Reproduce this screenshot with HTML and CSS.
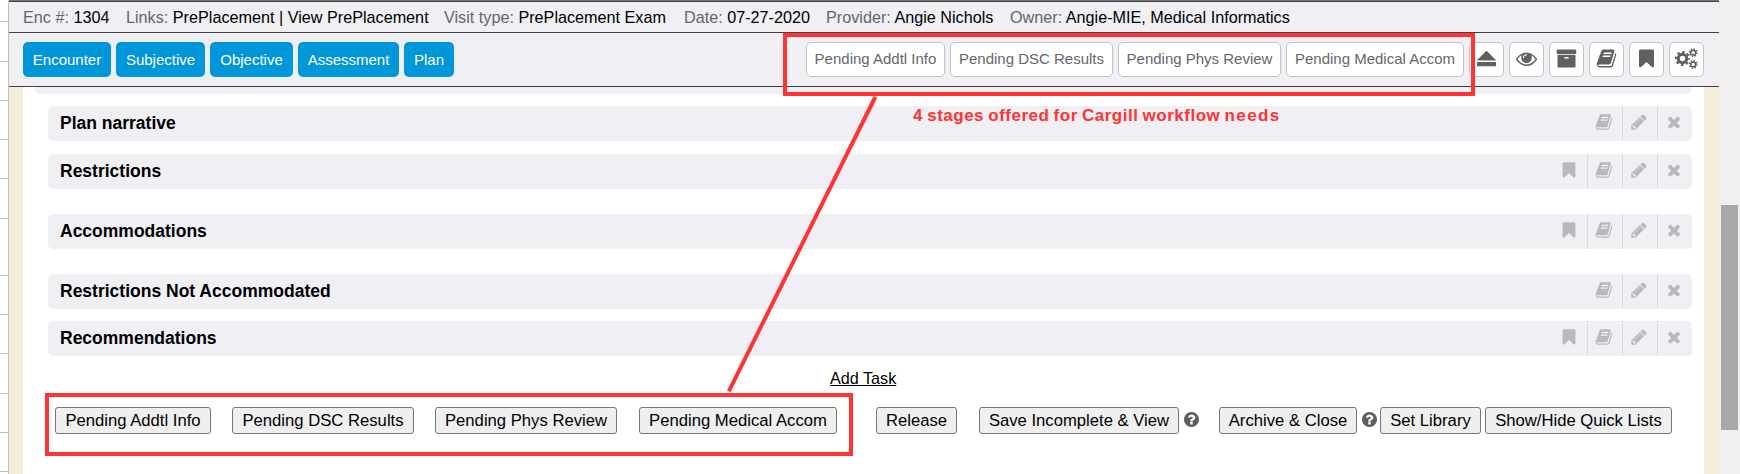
FILE: index.html
```html
<!DOCTYPE html>
<html lang="en">
<head>
<meta charset="utf-8">
<title>Encounter 1304</title>
<link rel="stylesheet" href="styles.css">
</head>
<body>
<svg class="defs" width="0" height="0">
  <symbol id="bookmark" viewBox="0 0 1792 1792"><path d="M1420 128q23 0 44 9 33 13 52.500 41t19.500 62v1289q0 34-19.500 62t-52.500 41q-19 8-44 8-48 0-83-32l-441-424-441 424q-36 33-83 33-23 0-44-9-33-13-52.500-41t-19.500-62v-1289q0-34 19.500-62t52.500-41q21-9 44-9h1048z"/></symbol>
  <symbol id="book" viewBox="0 0 1792 1792"><path d="M1703 478q40 57 18 129l-275 906q-19 64-76.500 107.500t-122.500 43.500h-923q-77 0-148.500-53.500t-99.500-131.500q-24-67-2-127 0-4 3-27t4-37q1-8-3-21.500t-3-19.500q2-11 8-21t16.500-23.500 16.500-23.500q23-38 45-91.500t30-91.500q3-10 .5-30t-.5-28q3-11 17-28t17-23q21-36 42-92t25-90q1-9-2.500-32t.5-28q4-13 22-30.500t22-22.500q19-26 42.500-84.500t27.500-96.500q1-8-3-25.500t-2-26.500q2-8 9-18t18-23 17-21q8-12 16.500-30.500t15-35 16-36 19.500-32 26.500-23.500 36-11.500 47.500 5.500l-1 3q38-9 51-9h761q74 0 114 56t18 130l-274 906q-36 119-71.500 153.500t-128.500 34.500h-869q-27 0-38 15-11 16-1 43 24 70 144 70h923q29 0 56-15.500t35-41.500l300-987q7-22 5-57 38 15 59 43zm-1064 2q-4 13 2 22.500t20 9.500h608q13 0 25.500-9.500t16.500-22.500l21-64q4-13-2-22.500t-20-9.500h-608q-13 0-25.500 9.500t-16.500 22.500zm-83 256q-4 13 2 22.500t20 9.500h608q13 0 25.500-9.500t16.500-22.500l21-64q4-13-2-22.500t-20-9.500h-608q-13 0-25.500 9.500t-16.500 22.500z"/></symbol>
  <symbol id="pencil" viewBox="0 0 1792 1792"><path d="M491 1536l91-91-235-235-91 91v107h128v128h107zm523-928q0-22-22-22-10 0-17 7l-542 542q-7 7-7 17 0 22 22 22 10 0 17-7l542-542q7-7 7-17zm-54-192l416 416-832 832h-416v-416zm683 96q0 53-37 90l-166 166-416-416 166-165q36-38 90-38 53 0 91 38l235 234q37 39 37 91z"/></symbol>
  <symbol id="times" viewBox="0 0 1792 1792"><path d="M1490 1322q0 40-28 68l-136 136q-28 28-68 28t-68-28l-294-294-294 294q-28 28-68 28t-68-28l-136-136q-28-28-28-68t28-68l294-294-294-294q-28-28-28-68t28-68l136-136q28-28 68-28t68 28l294 294 294-294q28-28 68-28t68 28l136 136q28 28 28 68t-28 68l-294 294 294 294q28 28 28 68z"/></symbol>
  <symbol id="archive" viewBox="0 0 1792 1792"><path d="M1088 832q0-26-19-45t-45-19h-256q-26 0-45 19t-19 45 19 45 45 19h256q26 0 45-19t19-45zm576-192v960q0 26-19 45t-45 19h-1408q-26 0-45-19t-19-45v-960q0-26 19-45t45-19h1408q26 0 45 19t19 45zm64-448v256q0 26-19 45t-45 19h-1536q-26 0-45-19t-19-45v-256q0-26 19-45t45-19h1536q26 0 45 19t19 45z"/></symbol>
  <symbol id="eye" viewBox="0 0 1792 1792"><path d="M1664 960q-152-236-381-353 61 104 61 225 0 185-131.500 316.500t-316.500 131.500-316.500-131.500-131.500-316.500q0-121 61-225-229 117-381 353 133 205 333.500 326.500t434.500 121.500 434.500-121.500 333.500-326.500zm-720-384q0-20-14-34t-34-14q-125 0-214.500 89.500t-89.500 214.500q0 20 14 34t34 14 34-14 14-34q0-86 61-147t147-61q20 0 34-14t14-34zm848 384q0 34-20 69-140 230-376.500 368.500t-499.500 138.500-499.500-139-376.500-368q-20-35-20-69t20-69q140-229 376.500-368t499.500-139 499.500 139 376.500 368q20 35 20 69z"/></symbol>
  <symbol id="help" viewBox="128 128 1536 1536"><path d="M1024 1376v-192q0-14-9-23t-23-9h-192q-14 0-23 9t-9 23v192q0 14 9 23t23 9h192q14 0 23-9t9-23zm256-672q0-88-55.500-163t-138.500-116-170-41q-243 0-371 213-15 24 8 42l132 100q7 6 19 6 16 0 25-12 53-68 86-92 34-24 86-24 48 0 85.500 26t37.500 59q0 38-20 61t-68 45q-63 28-115.500 86.500t-52.500 125.500v36q0 14 9 23t23 9h192q14 0 23-9t9-23q0-19 21.500-49.500t54.500-49.500q32-18 49-28.500t46-35 44.500-48 28-60.500 12.500-81zm384 192q0 209-103 385.500t-279.500 279.500-385.500 103-385.500-103-279.500-279.500-103-385.500 103-385.500 279.500-279.500 385.500-103 385.500 103 279.500 279.500 103 385.500z"/></symbol>
  <symbol id="eject" viewBox="0 0 21 21"><path d="M1.400 12.600q-.7 0-.2-.6l8.700-8.700q.6-.5 1.200 0l8.700 8.700q.5.600-.2.600zM1.600 14h17.800q.6 0 .6.600v3q0 .6-.6.600H1.600q-.6 0-.6-.6v-3q0-.6.600-.6z"/></symbol>
  <symbol id="cogs" viewBox="0 0 23 21">
    <g fill="none" stroke="currentColor">
      <circle cx="7.500" cy="10.500" r="4.200" stroke-width="3"/>
      <circle cx="7.500" cy="10.500" r="6.500" stroke-width="2.200" stroke-dasharray="2.600 2.505" stroke-dashoffset="1.300"/>
      <circle cx="18.200" cy="4.700" r="2.400" stroke-width="1.500"/>
      <circle cx="18.200" cy="4.700" r="3.700" stroke-width="1.500" stroke-dasharray="1.500 1.406" stroke-dashoffset=".2"/>
      <circle cx="18.200" cy="16.400" r="2.400" stroke-width="1.500"/>
      <circle cx="18.200" cy="16.400" r="3.700" stroke-width="1.500" stroke-dasharray="1.500 1.406" stroke-dashoffset=".2"/>
    </g>
  </symbol>
</svg>

<div class="app">
  <aside class="gutter">
    <i class="rule first"></i><i class="rule g39"></i><i class="rule"></i><i class="rule"></i><i class="rule"></i><i class="rule g39"></i>
    <i class="rule wide"></i><i class="rule"></i><i class="rule"></i><i class="rule g39"></i><i class="rule"></i><i class="rule"></i>
  </aside>

  <div class="page">
    <header class="info">
      <div><span class="label">Enc #:</span> 1304</div>
      <div><span class="label">Links:</span> PrePlacement | View PrePlacement</div>
      <div><span class="label">Visit type:</span> PrePlacement Exam</div>
      <div><span class="label">Date:</span> 07-27-2020</div>
      <div><span class="label">Provider:</span> Angie Nichols</div>
      <div><span class="label">Owner:</span> Angie-MIE, Medical Informatics</div>
    </header>

    <nav class="toolbar">
      <a class="tab w88">Encounter</a><a class="tab w89">Subjective</a><a class="tab w83">Objective</a><a class="tab w101">Assessment</a><a class="tab w50">Plan</a>
      <span class="spacer"></span>
      <a class="tool w139">Pending Addtl Info</a><a class="tool w163">Pending DSC Results</a><a class="tool w163">Pending Phys Review</a><a class="tool w178">Pending Medical Accom</a>
      <a class="tool icon"><svg><use href="#eject"/></svg></a><a class="tool icon"><svg><use href="#eye"/></svg></a><a class="tool icon"><svg><use href="#archive"/></svg></a><a class="tool icon"><svg><use href="#book"/></svg></a><a class="tool icon"><svg><use href="#bookmark"/></svg></a><a class="tool icon"><svg class="cogs"><use href="#cogs"/></svg></a>
    </nav>

    <main class="content">
      <div class="section-end"></div>
      <section class="row narrative"><h2>Plan narrative</h2>
        <span class="cell plain"><svg><use href="#book"/></svg></span><span class="cell"><svg><use href="#pencil"/></svg></span><span class="cell"><svg><use href="#times"/></svg></span></section>
      <section class="row restrictions"><h2>Restrictions</h2>
        <span class="cell plain"><svg><use href="#bookmark"/></svg></span><span class="cell"><svg><use href="#book"/></svg></span><span class="cell"><svg><use href="#pencil"/></svg></span><span class="cell"><svg><use href="#times"/></svg></span></section>
      <section class="row spaced"><h2>Accommodations</h2>
        <span class="cell plain"><svg><use href="#bookmark"/></svg></span><span class="cell"><svg><use href="#book"/></svg></span><span class="cell"><svg><use href="#pencil"/></svg></span><span class="cell"><svg><use href="#times"/></svg></span></section>
      <section class="row spaced"><h2>Restrictions Not Accommodated</h2>
        <span class="cell plain"><svg><use href="#book"/></svg></span><span class="cell"><svg><use href="#pencil"/></svg></span><span class="cell"><svg><use href="#times"/></svg></span></section>
      <section class="row"><h2>Recommendations</h2>
        <span class="cell plain"><svg><use href="#bookmark"/></svg></span><span class="cell"><svg><use href="#book"/></svg></span><span class="cell"><svg><use href="#pencil"/></svg></span><span class="cell"><svg><use href="#times"/></svg></span></section>
      <div class="task"><a>Add Task</a></div>
      <div class="actions">
        <button class="b1">Pending Addtl Info</button><button class="b2">Pending DSC Results</button><button class="b3">Pending Phys Review</button><button class="b4">Pending Medical Accom</button><button class="b5">Release</button><button class="b6">Save Incomplete &amp; View</button><svg class="help"><use href="#help"/></svg><button class="b7">Archive &amp; Close</button><svg class="help"><use href="#help"/></svg><button class="b8">Set Library</button><button class="b9">Show/Hide Quick Lists</button>
      </div>
    </main>
  </div>

  <div class="scrollbar"><div class="thumb"></div></div>
</div>

<div class="callout top"></div>
<div class="callout bottom"></div>
<svg class="connector" viewBox="0 0 1740 474"><path d="M875.300 97L728.800 391.300"/></svg>
<p class="note">4 stages offered for Cargill workflow <span>needs</span></p>
</body>
</html>
```

FILE: styles.css
```css
* { box-sizing: border-box; }
body {
  margin: 0;
  width: 1740px;
  height: 474px;
  overflow: hidden;
  position: relative;
  background: #fff;
  color: #000;
  font-family: "Liberation Sans", Arial, sans-serif;
}
.defs { position: absolute; }
svg { fill: currentColor; flex: none; }

.app { display: flex; height: 474px; }
.gutter { width: 9px; border-right: 1px solid #c0c0c4; }
.rule { display: block; height: 1px; margin-top: 38px; background: #c0c0c4; }
.rule.first { margin-top: 21px; }
.rule.g39 { margin-top: 39px; }
.rule.wide { margin-top: 56px; }

.page { width: 1710px; display: flex; flex-direction: column; }
.info {
  height: 33px;
  padding: 2px 0 0 14px;
  border-top: 1px solid #77777a;
  border-bottom: 1px solid #414143;
  box-shadow: inset 0 1px #414143;
  background: #efeff4;
  display: grid;
  grid-template-columns: 103px 318px 240px 142px 184px 1fr;
  align-items: center;
  font-size: 16.2px;
  white-space: pre;
  line-height: 29px;
}
.label { color: #66666a; }

.toolbar {
  height: 54px;
  padding: 9px 15px 0 14px;
  border-bottom: 1px solid #414143;
  background: #efeff4;
  display: flex;
  gap: 5px;
  font-size: 15px;
}
.tab, .tool { height: 35px; border-radius: 5px; text-align: center; white-space: nowrap; }
.tab { background: #0096da; color: #fff; line-height: 36px; }
.tool { border: 1px solid #c4c4c8; background: #fff; color: #66666a; line-height: 32px; }
.spacer { flex: 1; margin-right: -5px; }
.icon { width: 35px; padding-top: 5px; display: flex; justify-content: center; color: #5f6062; }
.icon svg { width: 21px; height: 21px; }
.icon svg.cogs { width: 23px; }
.w50 { width: 50px; } .w83 { width: 83px; } .w88 { width: 88px; } .w89 { width: 89px; } .w101 { width: 101px; }
.w139 { width: 139px; } .w163 { width: 163px; } .w178 { width: 178px; }

.content {
  flex: 1;
  border-left: 14px solid #f4ecdd;
  border-right: 15px solid #f4ecdd;
  padding: 0 12px;
  background: #fff;
}
.section-end { height: 7px; background: #efeff4; border-radius: 0 0 5px 5px; }
.row {
  height: 35px;
  margin: 12px 0 0 13px;
  padding-left: 12px;
  background: #efeff4;
  border-radius: 5px;
  display: flex;
}
.row.restrictions { margin-top: 13px; }
.row.spaced { margin-top: 25px; }
.row h2 { flex: 1; margin: 0; font-size: 17.500px; line-height: 34px; }
.cell {
  width: 35px;
  border-left: 1px solid #d9d9dd;
  padding: 7.300px 1.400px 0 0;
  display: flex;
  justify-content: center;
  color: #b9b8be;
}
.cell.plain { border-color: transparent; }
.cell svg { width: 18px; height: 18px; }

.task { height: 51px; padding: 12px 0 0 795px; font-size: 16.200px; line-height: 20px; }
.task a { text-decoration: underline; }
.actions { display: flex; align-items: center; padding-left: 20px; height: 27px; }
button {
  height: 27px;
  padding: 0;
  border: 1px solid #767676;
  border-radius: 3px;
  background: #efefef;
  color: #000;
  font: 16.670px/24px "Liberation Sans", Arial, sans-serif;
  white-space: nowrap;
}
.b1 { width: 156px; margin-right: 21px; }
.b2 { width: 182px; margin-right: 21px; }
.b3 { width: 182px; margin-right: 22px; }
.b4 { width: 198px; margin-right: 39px; }
.b5 { width: 81px; margin-right: 22px; }
.b6 { width: 200px; margin-right: 5px; }
.b7 { width: 138px; margin: 0 5px 0 20px; }
.b8 { width: 101px; margin: 0 4px 0 3px; }
.b9 { width: 187px; }
.help { width: 15px; height: 15px; margin-top: -2px; color: #5e5e5e; }

.scrollbar { width: 21px; padding: 205px 2px 0; background: #f0f0f0; }
.thumb { height: 225px; background: #a8a8a8; }

/* Annotations laid over the page */
.callout { position: absolute; height: 63px; border: 4px solid #f33; }
.callout.top { left: 783px; top: 33px; width: 692px; }
.callout.bottom { left: 45px; top: 393px; width: 808px; }
.connector { position: absolute; left: 0; top: 0; width: 1740px; height: 474px; fill: none; stroke: #f33; stroke-width: 4; }
.note {
  position: absolute;
  left: 913px;
  top: 106px;
  margin: 0;
  color: #f33;
  font-size: 17px;
  font-weight: bold;
  line-height: 20px;
  letter-spacing: .5px;
  word-spacing: -1px;
  white-space: nowrap;
}
.note span { letter-spacing: 1.400px; }
```
